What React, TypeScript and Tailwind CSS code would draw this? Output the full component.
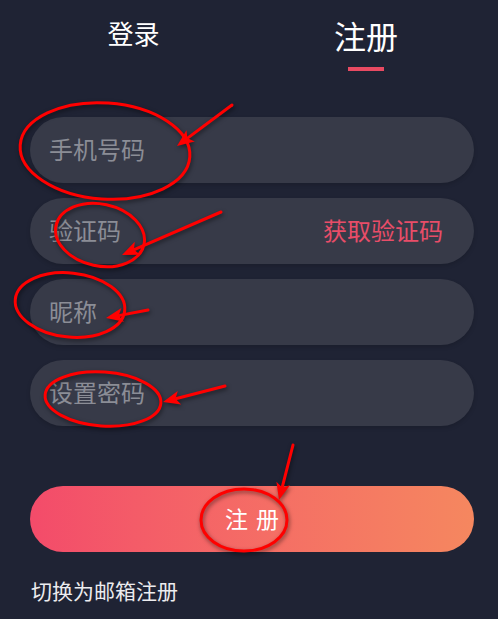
import React from "react";

const font = { fontFamily: '"Noto Sans CJK SC", "Noto Sans", sans-serif' };

type ArrowProps = { x1: number; y1: number; x2: number; y2: number };

const Arrow = ({ x1, y1, x2, y2 }: ArrowProps) => {
  const dx = x2 - x1;
  const dy = y2 - y1;
  const len = Math.hypot(dx, dy);
  const ux = dx / len;
  const uy = dy / len;
  const head = 17;
  const half = 7;
  const bx = x2 - ux * head;
  const by = y2 - uy * head;
  const p1 = `${bx - uy * half},${by + ux * half}`;
  const p2 = `${bx + uy * half},${by - ux * half}`;
  return (
    <g>
      <line x1={x1} y1={y1} x2={bx + ux * 3} y2={by + uy * 3} stroke="#ff0000" strokeWidth={3} strokeLinecap="round" />
      <polygon points={`${x2},${y2} ${p1} ${bx + ux * 4},${by + uy * 4} ${p2}`} fill="#ff0000" />
    </g>
  );
};

const Field = ({ placeholder, action }: { placeholder: string; action?: string }) => (
  <div className="flex h-[66px] items-center justify-between rounded-full bg-[#373a48] pl-[19px] pr-[31px] shadow-[0_2px_4px_rgba(0,0,0,0.15)]">
    <span className="pb-[3px] text-[24px] leading-none text-[#8b8d96]">{placeholder}</span>
    {action && <span className="pb-[3px] text-[24px] leading-none text-[#e84d68]">{action}</span>}
  </div>
);

const App = () => {
  return (
    <div className="relative min-h-screen w-full overflow-hidden bg-[#1f2334]" style={font}>
      <div className="flex pt-[19px]">
        <div className="flex w-[267px] justify-center">
          <span className="mt-[1px] text-[26px] leading-none text-white">登录</span>
        </div>
        <div className="flex w-[198px] flex-col items-center">
          <span className="text-[32px] leading-none text-white">注册</span>
          <div className="mt-[16px] h-[4px] w-[36px] bg-[#e84a62]" />
        </div>
      </div>

      <div className="mt-[46px] flex flex-col gap-[15px] pl-[30px] pr-[24px]">
        <Field placeholder="手机号码" />
        <Field placeholder="验证码" action="获取验证码" />
        <Field placeholder="昵称" />
        <Field placeholder="设置密码" />
      </div>

      <div className="mt-[60px] pl-[30px] pr-[24px]">
        <button className="flex h-[66px] w-full items-center justify-center gap-[8px] rounded-full bg-gradient-to-r from-[#f34b6a] to-[#f5875f] pb-[2px] text-[23px] leading-none text-white">
          <span>注</span>
          <span>册</span>
        </button>
      </div>

      <div className="mt-[28px] px-[31px] text-[21px] leading-none text-[#ececef]">切换为邮箱注册</div>

      <svg
        className="pointer-events-none absolute left-0 top-0 drop-shadow-[1px_2px_2px_rgba(0,0,0,0.5)]"
        width={498}
        height={619}
        viewBox="0 0 498 619"
      >
        <g fill="none" stroke="#ff0000" strokeWidth={3}>
          <ellipse cx={105} cy={151} rx={85} ry={48} transform="rotate(4 105 151)" />
          <ellipse cx={100} cy={235} rx={45} ry={31} transform="rotate(12 100 235)" />
          <ellipse cx={70} cy={305} rx={55} ry={32} transform="rotate(6 70 305)" />
          <ellipse cx={103} cy={399} rx={58} ry={27} transform="rotate(4 103 399)" />
          <ellipse cx={244} cy={520} rx={43} ry={31} />
        </g>
        <Arrow x1={232} y1={105} x2={177} y2={146} />
        <Arrow x1={221} y1={212} x2={122} y2={255} />
        <Arrow x1={148} y1={310} x2={106} y2={318} />
        <Arrow x1={225} y1={386} x2={163} y2={402} />
        <Arrow x1={293} y1={445} x2={279} y2={500} />
      </svg>
    </div>
  );
};

export default App;
